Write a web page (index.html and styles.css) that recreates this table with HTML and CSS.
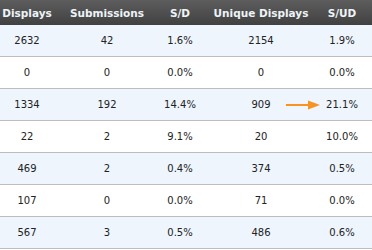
FILE: index.html
```html
<!DOCTYPE html>
<html>
<head>
<meta charset="utf-8">
<link rel="stylesheet" href="styles.css">
</head>
<body>
<div class="wrap">
<table class="stats">
  <colgroup>
    <col class="c1"><col class="c2"><col class="c3"><col class="c4"><col class="c5">
  </colgroup>
  <thead>
    <tr><th>Displays</th><th>Submissions</th><th>S/D</th><th>Unique Displays</th><th class="last">S/UD</th></tr>
  </thead>
  <tbody>
    <tr class="alt"><td>2632</td><td>42</td><td>1.6%</td><td>2154</td><td class="last">1.9%</td></tr>
    <tr><td>0</td><td>0</td><td>0.0%</td><td>0</td><td class="last">0.0%</td></tr>
    <tr class="alt"><td>1334</td><td>192</td><td>14.4%</td><td>909</td><td class="last">21.1%</td></tr>
    <tr><td>22</td><td>2</td><td>9.1%</td><td>20</td><td class="last">10.0%</td></tr>
    <tr class="alt"><td>469</td><td>2</td><td>0.4%</td><td>374</td><td class="last">0.5%</td></tr>
    <tr><td>107</td><td>0</td><td>0.0%</td><td>71</td><td class="last">0.0%</td></tr>
    <tr class="alt"><td>567</td><td>3</td><td>0.5%</td><td>486</td><td class="last">0.6%</td></tr>
  </tbody>
</table>
<svg class="arrow" width="36" height="12" viewBox="0 0 36 12">
  <rect x="0" y="5" width="24" height="2" fill="#f7931e"/>
  <polygon points="22,1.5 34,6 22,10.5" fill="#f7931e"/>
</svg>
</div>
</body>
</html>
```
FILE: styles.css
```css
html, body {
  margin: 0;
  padding: 0;
  background: #ffffff;
}
.wrap {
  position: relative;
  width: 372px;
}
.stats {
  width: 372px;
  border-collapse: collapse;
  table-layout: fixed;
  font-family: "DejaVu Sans", Verdana, sans-serif;
}
.c1 { width: 54px; }
.c2 { width: 106px; }
.c3 { width: 40px; }
.c4 { width: 122px; }
.c5 { width: 50px; }
.stats th {
  height: 25px;
  padding: 0;
  font-size: 10.5px;
  font-weight: bold;
  color: #eef3f8;
  text-align: center;
  white-space: nowrap;
  background: linear-gradient(#5d5d5d, #414141);
}
.stats td {
  height: 31px;
  padding: 0;
  font-size: 10px;
  color: #222222;
  text-align: center;
  white-space: nowrap;
  border-bottom: 1px solid #bdbdbd;
}
.stats .last {
  padding-right: 10px;
}
.stats tr.alt td {
  background: #eef5fd;
}
.arrow {
  position: absolute;
  left: 286px;
  top: 99px;
}
```
